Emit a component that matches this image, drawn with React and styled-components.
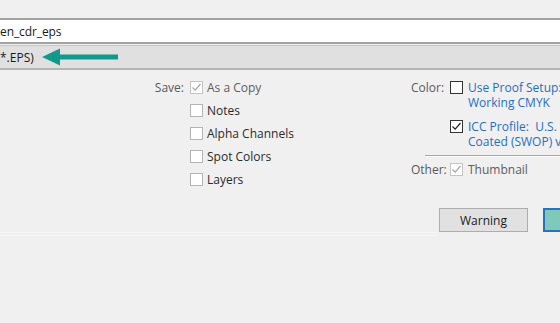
import React from "react";
import styled, { createGlobalStyle } from "styled-components";

const Global = createGlobalStyle`
  html, body { margin: 0; padding: 0; background: #f0f0f0; }
  body { font-family: "Segoe UI", "Open Sans", "Noto Sans", sans-serif; }
`;

const Page = styled.div`
  width: 560px;
  height: 323px;
  overflow: hidden;
  background: #f0f0f0;
  font-size: 12px;
  color: #222;
  padding-top: 18px;
  box-sizing: border-box;
`;

const FileField = styled.div`
  height: 22px;
  background: #fff;
  border-top: 2px solid #a3a3a3;
  border-bottom: 2px solid #a3a3a3;
  display: flex;
  align-items: center;
  color: #1a1a1a;
  letter-spacing: -0.1px;
`;

const FormatBox = styled.div`
  margin-top: 1px;
  height: 22px;
  background: #e0e0e0;
  border-top: 1px solid #c6c6c6;
  border-bottom: 2px solid #b5b5b5;
  display: flex;
  align-items: center;
  gap: 8px;
  color: #1a1a1a;
`;

const Options = styled.div`
  display: flex;
  padding-top: 6px;
`;

const SaveGroup = styled.div`
  width: 411px;
  flex-shrink: 0;
  display: flex;
  align-items: flex-start;
`;

const GroupLabel = styled.div`
  width: ${(p) => p.$w}px;
  text-align: right;
  color: #5a5a5a;
  height: 23px;
  line-height: 23px;
  flex-shrink: 0;
`;

const List = styled.div`
  display: flex;
  flex-direction: column;
  margin-left: 6px;
`;

const Row = styled.div`
  display: flex;
  align-items: center;
  height: 23px;
  gap: ${(p) => p.$gap || 4}px;
  color: ${(p) => (p.$disabled ? "#5e5e5e" : "#2b2b2b")};
`;

const Box = styled.span`
  width: 13px;
  height: 13px;
  box-sizing: border-box;
  border: 1px solid ${(p) => p.$border};
  background: #fff;
  display: inline-flex;
  align-items: center;
  justify-content: center;
  flex-shrink: 0;
`;

const Check = ({ color = "#333", checked, border = "#b4b4b4" }) => (
  <Box $border={border}>
    {checked && (
      <svg width="11" height="11" viewBox="0 0 11 11">
        <path d="M1.5 5.5 L4.2 8.2 L9.5 2" fill="none" stroke={color} strokeWidth="1.2" />
      </svg>
    )}
  </Box>
);

const ColorGroup = styled.div`
  flex: 1;
  min-width: 0;
  overflow: hidden;
  display: flex;
  flex-direction: column;
`;

const ColorRow = styled.div`
  display: flex;
  align-items: flex-start;
  margin-top: ${(p) => p.$mt || 0}px;
`;

const Item = styled.div`
  display: flex;
  align-items: flex-start;
  gap: 5px;
  min-width: 0;
`;

const BoxWrap = styled.div`
  height: 15px;
  display: flex;
  align-items: center;
`;

const BlueText = styled.div`
  display: flex;
  flex-direction: column;
  min-width: 0;
  overflow: hidden;
`;

const BlueLine = styled.span`
  color: #1f6fc4;
  line-height: 15px;
  white-space: nowrap;
`;

const SmallLabel = styled.div`
  width: 39px;
  color: #5a5a5a;
  line-height: 15px;
  flex-shrink: 0;
`;

const Divider = styled.div`
  margin: 6px 0 0 14px;
  height: 0;
  border-top: 1px solid #a8a8a8;
  border-bottom: 1px solid #fafafa;
`;

const OtherRow = styled.div`
  display: flex;
  align-items: center;
  height: 23px;
  margin-top: 1px;
`;

const ButtonBar = styled.div`
  position: relative;
  margin-top: 17px;
  display: flex;
  justify-content: flex-end;
  gap: 15px;
  margin-right: -43px;
`;

const Rule = styled.div`
  position: absolute;
  left: 0;
  width: 438px;
  top: 24px;
  height: 2px;
  border-top: 1px solid #f7f7f7;
  border-bottom: 1px solid #f7f7f7;
`;

const Button = styled.div`
  width: ${(p) => p.$w}px;
  height: 24px;
  box-sizing: border-box;
  background: ${(p) => (p.$primary ? "#7fc9ba" : "#e1e1e1")};
  border: ${(p) => (p.$primary ? "2px solid #2870c0" : "1px solid #adadad")};
  display: flex;
  align-items: center;
  justify-content: center;
  color: #1a1a1a;
`;

export default function App() {
  return (
    <>
      <Global />
      <Page>
        <FileField>en_cdr_eps</FileField>
        <FormatBox>
          <span>*.EPS)</span>
          <svg width="78" height="18" viewBox="0 0 78 18">
            <path d="M0 9 L18 0.5 L18 6.5 L76 6.5 L76 11.5 L18 11.5 L18 17.5 Z" fill="#13998b" />
          </svg>
        </FormatBox>
        <Options>
          <SaveGroup>
            <GroupLabel $w={184}>Save:</GroupLabel>
            <List>
              <Row $disabled>
                <Check checked color="#a6a6a6" border="#c4c4c4" />
                As a Copy
              </Row>
              <Row><Check />Notes</Row>
              <Row><Check />Alpha Channels</Row>
              <Row><Check />Spot Colors</Row>
              <Row><Check />Layers</Row>
            </List>
          </SaveGroup>
          <ColorGroup>
            <ColorRow $mt={4}>
              <SmallLabel>Color:</SmallLabel>
              <Item>
                <BoxWrap><Check border="#333" /></BoxWrap>
                <BlueText>
                  <BlueLine>Use Proof Setup:</BlueLine>
                  <BlueLine>Working CMYK</BlueLine>
                </BlueText>
              </Item>
            </ColorRow>
            <ColorRow $mt={9}>
              <SmallLabel />
              <Item>
                <BoxWrap><Check checked border="#333" color="#222" /></BoxWrap>
                <BlueText>
                  <BlueLine>ICC Profile:&nbsp; U.S. Web</BlueLine>
                  <BlueLine>Coated (SWOP) v2</BlueLine>
                </BlueText>
              </Item>
            </ColorRow>
            <Divider />
            <OtherRow>
              <SmallLabel>Other:</SmallLabel>
              <Row $disabled $gap={5}>
                <Check checked color="#a6a6a6" border="#c4c4c4" />
                Thumbnail
              </Row>
            </OtherRow>
          </ColorGroup>
        </Options>
        <ButtonBar>
          <Rule />
          <Button $w={89}>Warning</Button>
          <Button $w={60} $primary />
        </ButtonBar>
      </Page>
    </>
  );
}
